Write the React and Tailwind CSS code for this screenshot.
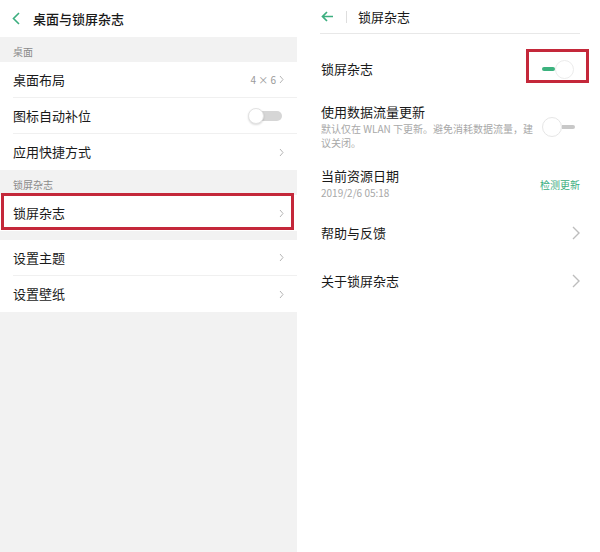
import React from 'react';

const font = { fontFamily: '"Noto Sans CJK SC", "Noto Sans", sans-serif' };

const SmallChevron = () => (
  <svg width="5" height="9" viewBox="0 0 5 9" fill="none" className="text-[#b5b5b5]">
    <path d="M1 1l3 3.5L1 8" stroke="currentColor" strokeWidth="1" />
  </svg>
);

const BigChevron = () => (
  <svg width="8" height="14" viewBox="0 0 8 14" fill="none" className="text-[#bdbdbd]">
    <path d="M1 1l6 6-6 6" stroke="currentColor" strokeWidth="1.4" />
  </svg>
);

const SectionHead = ({ label }) => (
  <div className="flex h-[25px] items-end pb-[3px] pl-[13px] text-[10px] leading-[14px] text-[#8a8a8a]">
    {label}
  </div>
);

// row is 36px tall in total, divider included
const Row = ({ label, right, divider = true }) => (
  <div className="bg-white">
    <div
      className={
        divider
          ? 'flex h-[35px] items-center justify-between pl-[13px] pr-[13px]'
          : 'flex h-[36px] items-center justify-between pl-[13px] pr-[13px]'
      }>
      <span className="text-[13px] text-[#1a1a1a]">{label}</span>
      {right}
    </div>
    {divider && <div className="ml-[13px] h-px bg-[#f0f0f0]" />}
  </div>
);

const LeftToggleOff = () => (
  <div className="relative flex h-[18px] w-[36px] items-center">
    <div className="ml-[14px] h-[10px] w-[20px] rounded-r-full bg-[#d6d6d6]" />
    <div className="absolute left-0 top-px h-[16px] w-[16px] rounded-full border border-[#e2e2e2] bg-white shadow-[0_1px_2px_rgba(0,0,0,0.15)]" />
  </div>
);

const LeftPanel = () => (
  <div className="flex w-[297px] flex-col bg-[#f2f2f2]">
    <div className="flex h-[37px] items-center gap-[13px] bg-white pl-[12px]">
      <svg width="8" height="13" viewBox="0 0 8 13" fill="none">
        <path d="M7 1L1.5 6.5 7 12" stroke="#3cae7f" strokeWidth="1.6" />
      </svg>
      <span className="text-[13px] font-medium text-[#1a1a1a]">桌面与锁屏杂志</span>
    </div>
    <SectionHead label="桌面" />
    <Row
      label="桌面布局"
      right={
        <span className="flex items-center gap-[3px] text-[10px] text-[#9a9a9a]">
          4 × 6 <SmallChevron />
        </span>
      }
    />
    <Row label="图标自动补位" right={<LeftToggleOff />} />
    <Row label="应用快捷方式" right={<SmallChevron />} divider={false} />
    <SectionHead label="锁屏杂志" />
    <div className="relative">
      <Row label="锁屏杂志" right={<SmallChevron />} divider={false} />
      <div className="absolute left-px right-[3px] top-[-2px] bottom-[1px] border-[3px] border-[#c4283a]" />
    </div>
    <div className="h-[9px]" />
    <Row label="设置主题" right={<SmallChevron />} />
    <Row label="设置壁纸" right={<SmallChevron />} divider={false} />
  </div>
);

const RightPanel = () => (
  <div className="flex flex-1 flex-col bg-white">
    <div className="ml-[23px] mr-[20px] flex h-[34px] items-center border-b border-[#e8e8e8]">
      <svg width="13" height="11" viewBox="0 0 13 11" fill="none" className="ml-[1px]">
        <path d="M12 5.5H2M6 1L1.5 5.5 6 10" stroke="#3cae7f" strokeWidth="1.7" />
      </svg>
      <div className="ml-[12px] h-[12px] w-px bg-[#dedede]" />
      <span className="ml-[11px] text-[13px] text-[#1a1a1a]">锁屏杂志</span>
    </div>

    <div className="relative flex h-[70px] items-center justify-between pl-[24px] pr-[26px]">
      <span className="text-[13px] text-[#1a1a1a]">锁屏杂志</span>
      <div className="flex items-center">
        <div className="h-[4px] w-[13px] rounded-full bg-[#3cb27e]" />
        <div className="h-[19px] w-[19px] rounded-full border border-[#ececec] bg-white" />
      </div>
      <div className="absolute left-[229px] top-[15px] h-[34px] w-[63px] border-[3px] border-[#c4283a]" />
    </div>

    <div className="flex items-center justify-between pl-[24px] pr-[25px]">
      <div className="w-[215px]">
        <div className="text-[13px] leading-[16px] text-[#1a1a1a]">使用数据流量更新</div>
        <div className="mt-[2px] text-[10px] leading-[14px] text-[#a8a8a8]">
          默认仅在 WLAN 下更新。避免消耗数据流量，建议关闭。
        </div>
      </div>
      <div className="flex items-center">
        <div className="h-[20px] w-[20px] rounded-full border border-[#e6e6e6] bg-white" />
        <div className="h-[4px] w-[13px] rounded-r-full bg-[#c8c8c8]" />
      </div>
    </div>

    <div className="mt-[18px] flex items-center justify-between pl-[24px] pr-[20px]">
      <div>
        <div className="text-[13px] leading-[16px] text-[#1a1a1a]">当前资源日期</div>
        <div className="mt-[2px] text-[10px] leading-[14px] text-[#a8a8a8]">2019/2/6 05:18</div>
      </div>
      <span className="text-[10px] text-[#3cae7f]">检测更新</span>
    </div>

    <div className="mt-[9px] flex h-[48px] items-center justify-between pl-[24px] pr-[20px]">
      <span className="text-[13px] text-[#1a1a1a]">帮助与反馈</span>
      <BigChevron />
    </div>
    <div className="flex h-[48px] items-center justify-between pl-[24px] pr-[20px]">
      <span className="text-[13px] text-[#1a1a1a]">关于锁屏杂志</span>
      <BigChevron />
    </div>
  </div>
);

export default function App() {
  return (
    <div className="flex h-[552px] w-[600px] overflow-hidden" style={font}>
      <LeftPanel />
      <RightPanel />
    </div>
  );
}
